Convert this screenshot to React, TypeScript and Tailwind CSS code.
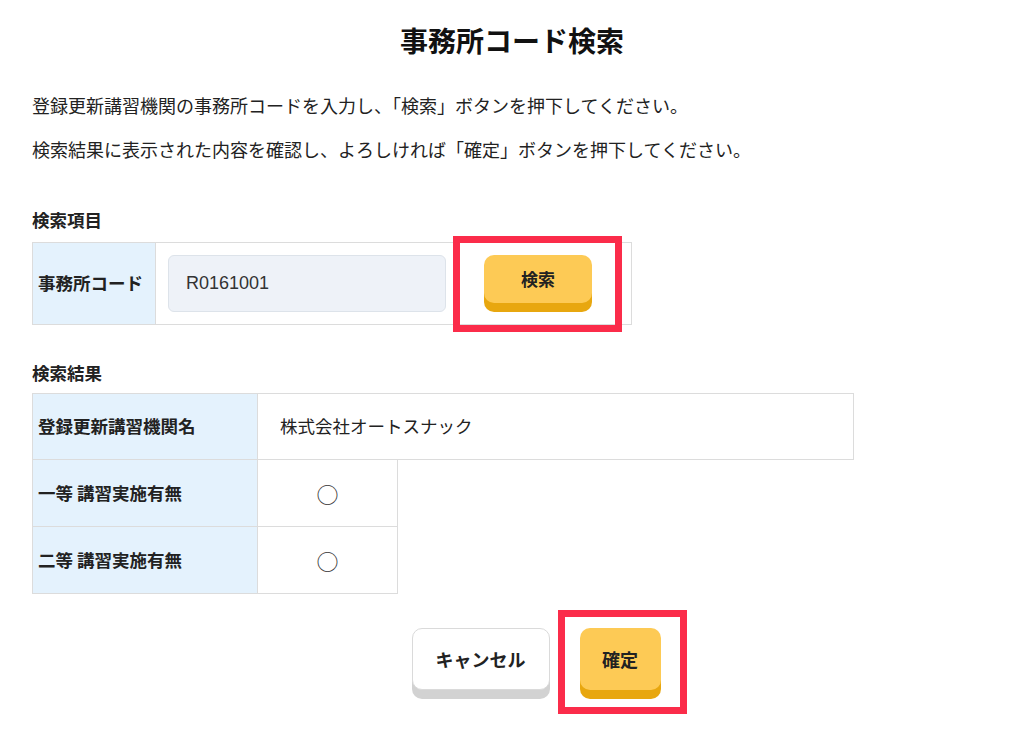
import React from 'react';

const font = { fontFamily: '"Noto Sans CJK JP", "Noto Sans", sans-serif' };

const RedMark = ({ className }: { className: string }) => (
  <span className={`pointer-events-none absolute border-[7px] border-[#fb2c4a] ${className}`} />
);

export default function App() {
  return (
    <div className="min-h-[736px] w-[1024px] bg-white text-[#222]" style={font}>
      <div className="flex flex-col pl-8 pt-4">
        {/* Title */}
        <h1 className="h-12 pr-8 text-center text-[28px] font-bold leading-[48px] text-[#111]">
          事務所コード検索
        </h1>

        {/* Guidance */}
        <div className="mt-[19px] text-[18px] leading-[44px]">
          <p>登録更新講習機関の事務所コードを入力し、「検索」ボタンを押下してください。</p>
          <p>検索結果に表示された内容を確認し、よろしければ「確定」ボタンを押下してください。</p>
        </div>

        {/* Search */}
        <h2 className="mt-[35px] text-[17.5px] font-bold leading-[28px]">検索項目</h2>
        <div className="mt-2 flex h-[83px] w-[600px] border border-[#dcdcdc]">
          <div className="flex w-[123px] items-center border-r border-[#dcdcdc] bg-[#e4f2fd] pl-[5px] text-[17.5px] font-bold">
            事務所コード
          </div>
          <div className="flex flex-1 items-center gap-[38px] pl-3">
            <div
              className="flex h-[57px] w-[278px] items-center rounded-md border border-[#dde3ea] bg-[#eef2f8] pl-[17px] text-[18px] text-[#333]"
              style={{ fontFamily: '"Liberation Sans", Arial, sans-serif' }}
            >
              R0161001
            </div>
            <div className="relative mb-[9px]">
              <button className="h-[48px] w-[108px] rounded-[10px] bg-[#fdca55] text-[17px] font-bold text-[#222] shadow-[0_9px_0_#e8a70f]">
                検索
              </button>
              <RedMark className="-bottom-[29px] -left-[31px] -right-[30px] -top-[19px]" />
            </div>
          </div>
        </div>

        {/* Results */}
        <h2 className="mt-[34px] text-[17.5px] font-bold leading-[28px]">検索結果</h2>
        <div className="mt-[6px] flex w-[822px] flex-col text-[17.5px]">
          <div className="flex h-[67px] border border-[#dcdcdc]">
            <div className="flex w-[225px] items-center border-r border-[#dcdcdc] bg-[#e4f2fd] pl-[5px] font-bold">
              登録更新講習機関名
            </div>
            <div className="flex flex-1 items-center pl-[22px]">株式会社オートスナック</div>
          </div>
          {['一等 講習実施有無', '二等 講習実施有無'].map((label) => (
            <div key={label} className="flex h-[67px] w-[366px] border border-t-0 border-[#dcdcdc]">
              <div className="flex w-[225px] items-center border-r border-[#dcdcdc] bg-[#e4f2fd] pl-[5px] font-bold">
                {label}
              </div>
              <div className="flex flex-1 items-center justify-center text-[22px] text-[#333]">○</div>
            </div>
          ))}
        </div>
      </div>

      {/* Actions */}
      <div className="mt-[34px] flex justify-center gap-[30px] pl-[48px]">
        <button className="h-[62px] w-[138px] rounded-[10px] border border-[#dadada] bg-white text-[18px] font-bold text-[#222] shadow-[0_9px_0_#d2d2d2]">
          キャンセル
        </button>
        <div className="relative">
          <button className="h-[62px] w-[81px] rounded-[10px] bg-[#fdca55] text-[18px] font-bold text-[#222] shadow-[0_9px_0_#e8a70f]">
            確定
          </button>
          <RedMark className="-bottom-[24px] -left-[22px] -right-[26px] -top-[18px]" />
        </div>
      </div>
    </div>
  );
}
